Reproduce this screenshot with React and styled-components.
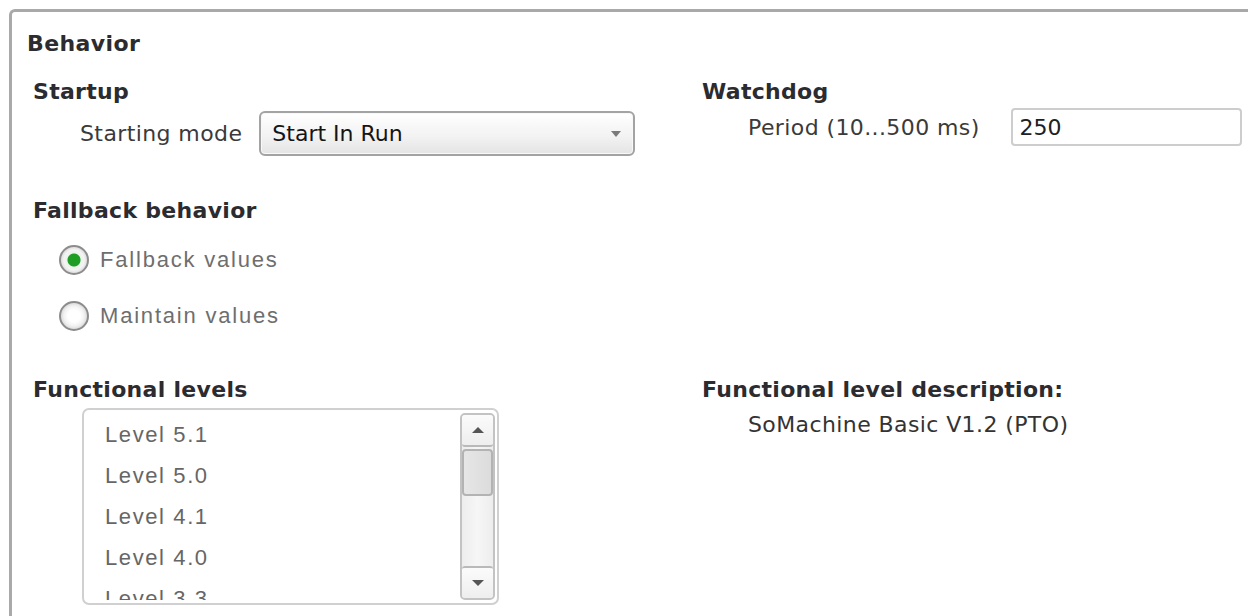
import styled, { createGlobalStyle } from "styled-components";

const GlobalStyle = createGlobalStyle`
  html, body {
    margin: 0;
    padding: 0;
    background: #fff;
    overflow: hidden;
  }
  body {
    font-family: "DejaVu Sans", "Liberation Sans", sans-serif;
    color: #333;
  }
`;

const Panel = styled.div`
  margin: 9px 0 0 9px;
  min-height: calc(100vh - 9px);
  border-top: 3px solid #a9a9a9;
  border-left: 3px solid #a9a9a9;
  border-top-left-radius: 6px;
  padding: 20px 0 0 15px;
  box-sizing: border-box;
`;

const Title = styled.div`
  font-weight: bold;
  font-size: 22px;
  line-height: 24px;
  letter-spacing: 0.4px;
  color: #2b2b30;
  margin-bottom: 24px;
`;

const Grid = styled.div`
  display: grid;
  grid-template-columns: 669px 1fr;
  align-items: start;
  margin-left: 6px;
`;

const Section = styled.div`
  display: flex;
  flex-direction: column;
  margin-top: ${(p) => p.$top || 0}px;
  grid-column: ${(p) => (p.$wide ? "1 / span 2" : "auto")};
`;

const Heading = styled.div`
  font-weight: bold;
  font-size: 22px;
  line-height: 24px;
  letter-spacing: 0.3px;
  color: #2b2b30;
`;

const FieldRow = styled.div`
  display: flex;
  align-items: center;
  margin-top: ${(p) => p.$top}px;
  padding-left: ${(p) => p.$indent}px;
  gap: ${(p) => p.$gap}px;
`;

const Label = styled.span`
  font-size: 22px;
  letter-spacing: 0.4px;
  color: #3a3a3a;
  white-space: nowrap;
`;

const Select = styled.div`
  width: 376px;
  height: 45px;
  box-sizing: border-box;
  border: 2px solid #a3a3a3;
  border-radius: 6px;
  background: linear-gradient(#ffffff, #f3f3f3 55%, #e4e4e4);
  box-shadow: inset 0 0 0 1px #f8f8f8;
  display: flex;
  align-items: center;
  justify-content: space-between;
  padding: 0 12px 0 11px;
  font-size: 22px;
  color: #151515;
`;

const Caret = styled.span`
  width: 0;
  height: 0;
  border-left: 5px solid transparent;
  border-right: 5px solid transparent;
  border-top: 6px solid #7a7a7a;
`;

const TextInput = styled.div`
  width: 231px;
  height: 38px;
  box-sizing: border-box;
  border: 2px solid #cdcdcd;
  border-radius: 4px;
  display: flex;
  align-items: center;
  padding-left: 7px;
  font-size: 22px;
  color: #202020;
`;

const RadioGroup = styled.div`
  display: flex;
  flex-direction: column;
  gap: 28px;
  margin-top: 23px;
  padding-left: 26px;
`;

const RadioRow = styled.div`
  display: flex;
  align-items: center;
  gap: 11px;
  height: 28px;
`;

const RadioCircle = styled.span`
  width: 30px;
  height: 30px;
  box-sizing: border-box;
  border-radius: 50%;
  border: 2px solid #8c8c8c;
  background: ${(p) =>
    p.$checked
      ? "radial-gradient(circle, #1f9e26 0 6px, #e9f3e9 7px, #f4f4f4 10px, #dedede 13px)"
      : "radial-gradient(circle, #ffffff 0 6px, #f2f2f2 10px, #dcdcdc 13px)"};
`;

const OptionText = styled.span`
  font-family: "Liberation Sans", Arial, sans-serif;
  font-size: 22px;
  letter-spacing: 1.8px;
  color: #6e6e6e;
`;

const ListBox = styled.div`
  width: 417px;
  height: 197px;
  box-sizing: border-box;
  margin: 6px 0 0 49px;
  border: 2px solid #d0d0d0;
  border-radius: 7px;
  display: flex;
  padding: 3px 2px 3px 0;
  overflow: hidden;
`;

const Items = styled.div`
  flex: 1;
  overflow: hidden;
  padding: 1px 0 0 21px;
`;

const Item = styled.div`
  font-family: "Liberation Sans", Arial, sans-serif;
  font-size: 22px;
  letter-spacing: 1.6px;
  height: 41px;
  line-height: 41px;
  color: #666;
`;

const Scrollbar = styled.div`
  width: 35px;
  display: flex;
  flex-direction: column;
  border: 2px solid #c3c3c3;
  border-radius: 5px;
  background: linear-gradient(90deg, #ededed, #f6f6f6 50%, #ededed);
  box-sizing: border-box;
`;

const ArrowButton = styled.div`
  height: 30px;
  display: flex;
  align-items: center;
  justify-content: center;
  background: linear-gradient(#fbfbfb, #eeeeee);
  border-${(p) => (p.$up ? "bottom" : "top")}: 2px solid #b9b9b9;
  border-radius: 3px;
`;

const Arrow = styled.span`
  width: 0;
  height: 0;
  border-left: 6px solid transparent;
  border-right: 6px solid transparent;
  ${(p) => (p.$up ? "border-bottom" : "border-top")}: 6px solid #555;
`;

const Thumb = styled.div`
  height: 47px;
  margin-top: 2px;
  border: 2px solid #b3b3b3;
  border-radius: 4px;
  background: linear-gradient(90deg, #e6e6e6, #dcdcdc);
  box-sizing: border-box;
`;

const Track = styled.div`
  flex: 1;
`;

const Description = styled.div`
  font-size: 22px;
  letter-spacing: 0.4px;
  color: #333;
  margin-top: 10px;
  padding-left: 46px;
`;

const levels = ["Level 5.1", "Level 5.0", "Level 4.1", "Level 4.0", "Level 3.3"];

export default function App() {
  return (
    <>
      <GlobalStyle />
      <Panel>
        <Title>Behavior</Title>
        <Grid>
          <Section>
            <Heading>Startup</Heading>
            <FieldRow $top={7} $indent={47} $gap={17}>
              <Label>Starting mode</Label>
              <Select>
                Start In Run
                <Caret />
              </Select>
            </FieldRow>
          </Section>
          <Section>
            <Heading>Watchdog</Heading>
            <FieldRow $top={4} $indent={46} $gap={31}>
              <Label>Period (10...500 ms)</Label>
              <TextInput>250</TextInput>
            </FieldRow>
          </Section>

          <Section $wide $top={43}>
            <Heading>Fallback behavior</Heading>
            <RadioGroup>
              <RadioRow>
                <RadioCircle $checked />
                <OptionText>Fallback values</OptionText>
              </RadioRow>
              <RadioRow>
                <RadioCircle />
                <OptionText>Maintain values</OptionText>
              </RadioRow>
            </RadioGroup>
          </Section>

          <Section $top={48}>
            <Heading>Functional levels</Heading>
            <ListBox>
              <Items>
                {levels.map((l) => (
                  <Item key={l}>{l}</Item>
                ))}
              </Items>
              <Scrollbar>
                <ArrowButton $up>
                  <Arrow $up />
                </ArrowButton>
                <Thumb />
                <Track />
                <ArrowButton>
                  <Arrow />
                </ArrowButton>
              </Scrollbar>
            </ListBox>
          </Section>
          <Section $top={48}>
            <Heading>Functional level description:</Heading>
            <Description>SoMachine Basic V1.2 (PTO)</Description>
          </Section>
        </Grid>
      </Panel>
    </>
  );
}
